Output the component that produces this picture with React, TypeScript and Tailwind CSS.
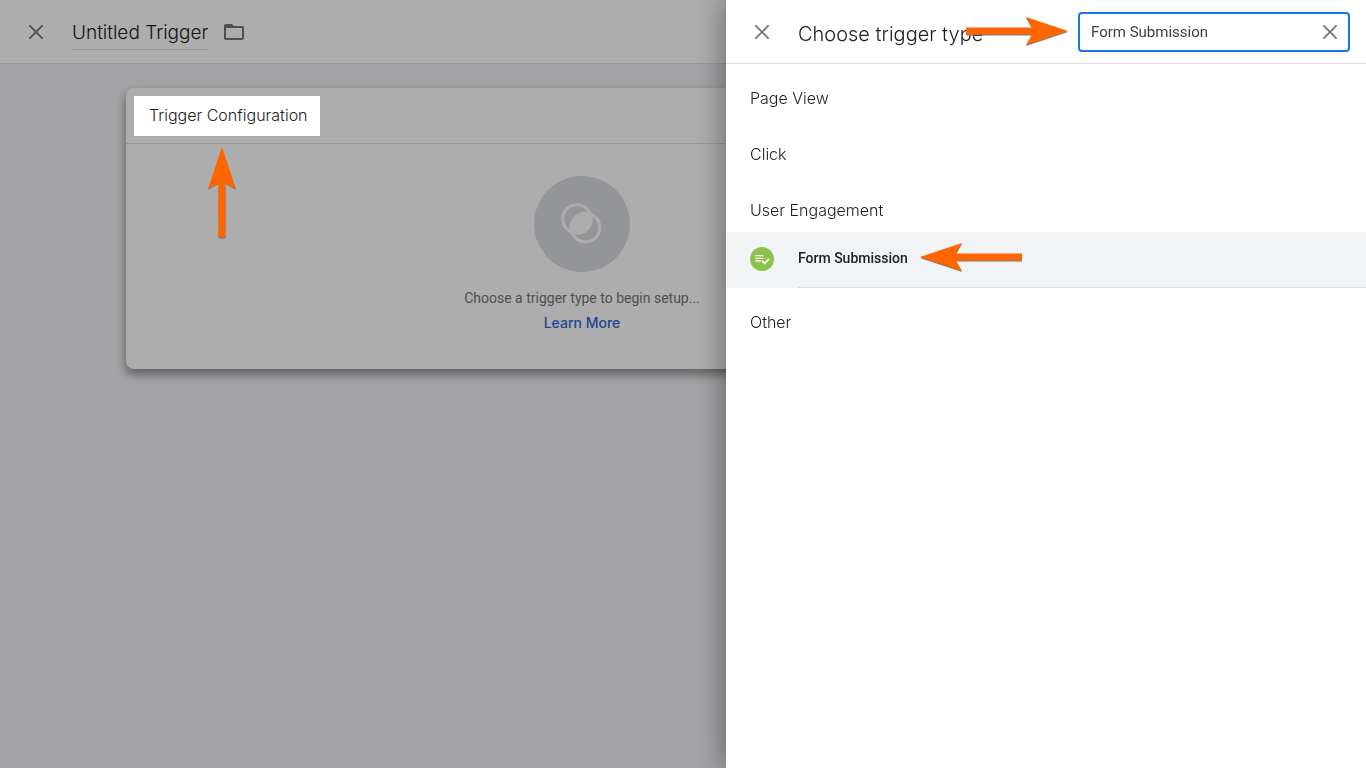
import { useState, type ReactNode } from 'react';

interface TriggerGroup {
  label: string;
  items: string[];
}

const triggerGroups: TriggerGroup[] = [
  { label: 'Page View', items: [] },
  { label: 'Click', items: [] },
  { label: 'User Engagement', items: ['Form Submission'] },
  { label: 'Other', items: [] },
];

function CloseIcon() {
  return (
    <svg className="h-6 w-6" viewBox="0 0 24 24" fill="none" stroke="currentColor" strokeWidth="1.9" aria-hidden="true">
      <path d="M5.4 5.4l13.2 13.2M18.6 5.4L5.4 18.6" />
    </svg>
  );
}

function FolderIcon() {
  return (
    <svg className="h-6 w-6" viewBox="0 0 24 24" fill="currentColor" aria-hidden="true">
      <path d="M20 6h-8l-2-2H4c-1.1 0-1.99.9-1.99 2L2 18c0 1.1.9 2 2 2h16c1.1 0 2-.9 2-2V8c0-1.1-.9-2-2-2zm0 12H4V8h16v10z" />
    </svg>
  );
}

function FormIcon() {
  return (
    <span className="mb-0.5 flex h-6 w-6 items-center justify-center rounded-full bg-[#8bc34a] text-white">
      <svg className="h-4 w-4" viewBox="0 0 24 24" fill="currentColor" aria-hidden="true">
        <path d="M14 10H2v2h12v-2zm0-4H2v2h12V6zM2 16h8v-2H2v2z" />
        <path d="M21.5 11.5L23 13l-6.99 7-4.51-4.5L13 14l3.01 3 5.49-5.5z" stroke="currentColor" strokeWidth="0.8" />
      </svg>
    </span>
  );
}

function TriggerIcon() {
  return (
    <svg className="h-24 w-24" viewBox="0 0 96 96" aria-hidden="true">
      <defs>
        <clipPath id="overlap">
          <circle cx="43" cy="43" r="15.5" />
        </clipPath>
      </defs>
      <circle cx="48" cy="48" r="48" fill="#dadce0" />
      <g fill="none" stroke="#fff" strokeWidth="3">
        <circle cx="43" cy="43" r="14.3" />
        <circle cx="51.5" cy="51.5" r="14.3" />
      </g>
      <circle cx="51.5" cy="51.5" r="15.5" fill="#fff" clipPath="url(#overlap)" />
    </svg>
  );
}

function ArrowUp() {
  return (
    <svg width="30" height="93" viewBox="0 0 30 93" aria-hidden="true">
      <path d="M15 1l14 42-10.5-6v54.5h-7V37L1 43z" fill="#8a7766" />
      <path d="M15 0l14 42-10.5-6v54h-7V36L1 42z" fill="#ff6500" />
    </svg>
  );
}

function ArrowSide({ flip }: { flip?: boolean }) {
  return (
    <svg
      className={flip ? '-scale-x-100' : ''}
      width="102"
      height="30"
      viewBox="0 0 102 30"
      aria-hidden="true"
    >
      <path d="M102 15L60 29l6-10.5H0v-7h66L60 1z" fill="#8a7766" />
      <path d="M102 14L60 28l6-10.5H0v-7h66L60 0z" fill="#ff6500" />
    </svg>
  );
}

function IconButton({ label, onClick, children }: { label: string; onClick?: () => void; children: ReactNode }) {
  return (
    <button type="button" aria-label={label} onClick={onClick} className="shrink-0 text-[#757575]">
      {children}
    </button>
  );
}

export default function App() {
  const [name, setName] = useState('Untitled Trigger');
  const [query, setQuery] = useState('Form Submission');

  return (
    <div className="min-h-screen bg-[#f0f1f4] font-[Inter,sans-serif] font-light text-[#202124]">
      {/* Trigger editor */}
      <header className="flex h-16 items-center border-b border-[#dadce0] bg-white px-6">
        <IconButton label="Close">
          <CloseIcon />
        </IconButton>
        <input
          aria-label="Trigger name"
          value={name}
          onChange={(e) => setName(e.target.value)}
          className="mt-1 ml-6 h-8 field-sizing-content border-b border-[#dadce0] bg-transparent pb-0.5 text-[19px] outline-none"
        />
        <div className="ml-3.5 flex">
          <IconButton label="Move to folder">
            <FolderIcon />
          </IconButton>
        </div>
      </header>

      <main className="pt-6 pr-[202px]">
        <section className="mx-auto max-w-[912px] rounded-lg bg-white shadow-[0_5px_10px_1px_rgba(0,0,0,0.4)]">
          <div className="flex border-b border-[#dadce0] px-2 pt-2 pb-[7px]">
            <div className="relative z-20 bg-white pr-3 pl-[15px]">
              <h2 className="pb-0.5 text-base leading-[38px]">Trigger Configuration</h2>
              <div className="absolute top-full left-1/2 mt-[11px] -ml-5">
                <ArrowUp />
              </div>
            </div>
          </div>
          <div className="flex flex-col items-center pt-8 pb-[34px] font-[Roboto,sans-serif] text-sm">
            <TriggerIcon />
            <p className="mt-3.5 leading-6 font-normal text-[#757575]">Choose a trigger type to begin setup...</p>
            <a href="#learn-more" className="mt-px font-[Inter,sans-serif] leading-6 font-medium text-[#3367d6]">
              Learn More
            </a>
          </div>
        </section>
      </main>

      <div className="fixed inset-0 z-10 bg-black/32" />

      {/* Trigger type drawer */}
      <aside className="fixed inset-y-0 right-0 z-30 w-[640px] max-w-full bg-white shadow-[0_0_28px_2px_rgba(0,0,0,0.4)]">
        <header className="flex h-16 items-center border-b border-[#dadce0] pr-4 pl-6">
          <IconButton label="Close panel">
            <CloseIcon />
          </IconButton>
          <h1 className="mt-1 ml-6 text-xl">Choose trigger type</h1>
          <div className="relative ml-auto flex h-10 w-[272px] items-center rounded border-2 border-[#1a73e8] pr-1.5 pl-[11px]">
            <div className="absolute right-full mr-3">
              <ArrowSide />
            </div>
            <input
              type="text"
              aria-label="Search trigger types"
              value={query}
              onChange={(e) => setQuery(e.target.value)}
              className="min-w-0 flex-1 bg-transparent pt-0.5 font-[Roboto,sans-serif] text-[15px] font-normal text-[#3c4043] outline-none"
            />
            <IconButton label="Clear search" onClick={() => setQuery('')}>
              <CloseIcon />
            </IconButton>
          </div>
        </header>

        {triggerGroups.map((group) => (
          <section key={group.label}>
            <h3 className="flex h-14 items-center px-6 pt-3 text-base">{group.label}</h3>
            {group.items.map((item) => (
              <div key={item} className="flex h-14 items-center bg-[#f1f3f4] pl-6">
                <FormIcon />
                <div className="ml-6 flex h-full flex-1 items-center gap-3 border-b border-[#dadce0] pb-1">
                  <button type="button" className="font-[Roboto,sans-serif] text-sm font-medium">
                    {item}
                  </button>
                  <ArrowSide flip />
                </div>
              </div>
            ))}
          </section>
        ))}
      </aside>
    </div>
  );
}
